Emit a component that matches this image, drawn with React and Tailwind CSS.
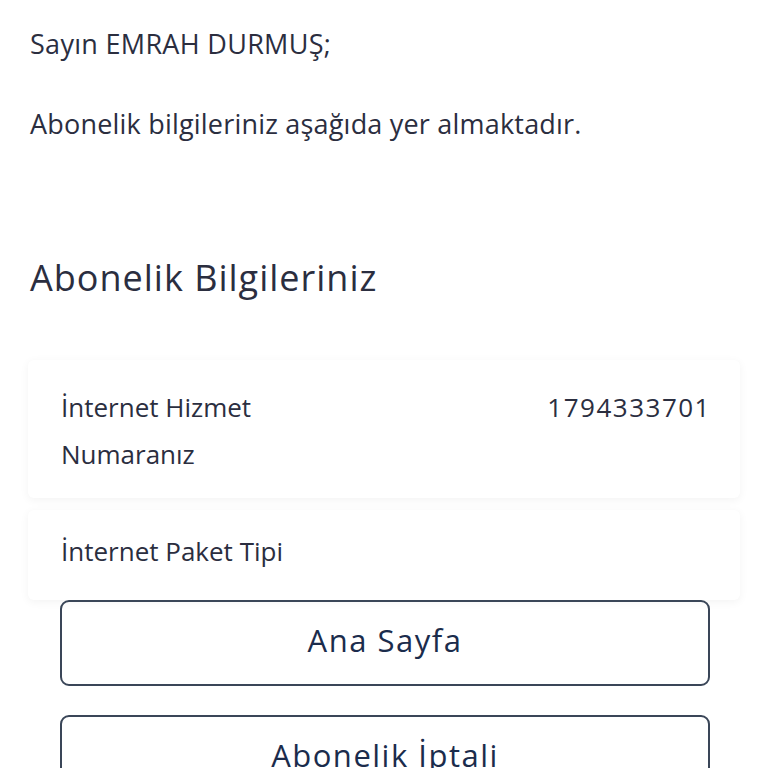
export default function App() {
  return (
    <div className="min-h-screen bg-white text-[#2b2e3f] font-['Open_Sans','Noto_Sans',sans-serif] overflow-hidden h-[768px]">
      <div className="px-[30px] pt-[26px]">
        <p className="text-[27px] leading-[36px] tracking-[0.3px]">Sayın EMRAH DURMUŞ;</p>
        <p className="text-[27px] leading-[36px] tracking-[0.2px] mt-[44px]">Abonelik bilgileriniz aşağıda yer almaktadır.</p>
        <h1 className="text-[36px] leading-[48px] tracking-[1px] mt-[112px]">Abonelik Bilgileriniz</h1>
      </div>

      <div className="px-[28px] mt-[58px]">
        <div className="bg-white rounded-md shadow-[0_2px_10px_rgba(0,0,0,0.05)] h-[138px] pl-[33px] pr-[29px] pt-[24px] flex justify-between">
          <div className="text-[26px] leading-[47px]">
            İnternet Hizmet
            <br />
            Numaranız
          </div>
          <div className="text-[26px] leading-[47px] tracking-[1.5px]">1794333701</div>
        </div>
        <div className="bg-white rounded-md shadow-[0_2px_10px_rgba(0,0,0,0.05)] h-[90px] mt-[12px] px-[33px] pt-[18px]">
          <div className="text-[26px] leading-[47px]">İnternet Paket Tipi</div>
        </div>
      </div>

      <div className="pl-[60px] pr-[58px] flex flex-col gap-[29px]">
        <button className="h-[86px] w-full pb-[6px] rounded-[9px] border-2 border-[#3a4658] text-[#1b2c4c] text-[31px] tracking-[1.5px]">
          Ana Sayfa
        </button>
        <button className="h-[86px] w-full pb-[6px] rounded-[9px] border-2 border-[#3a4658] text-[#1b2c4c] text-[31px] tracking-[1.5px]">
          Abonelik İptali
        </button>
      </div>
    </div>
  )
}
